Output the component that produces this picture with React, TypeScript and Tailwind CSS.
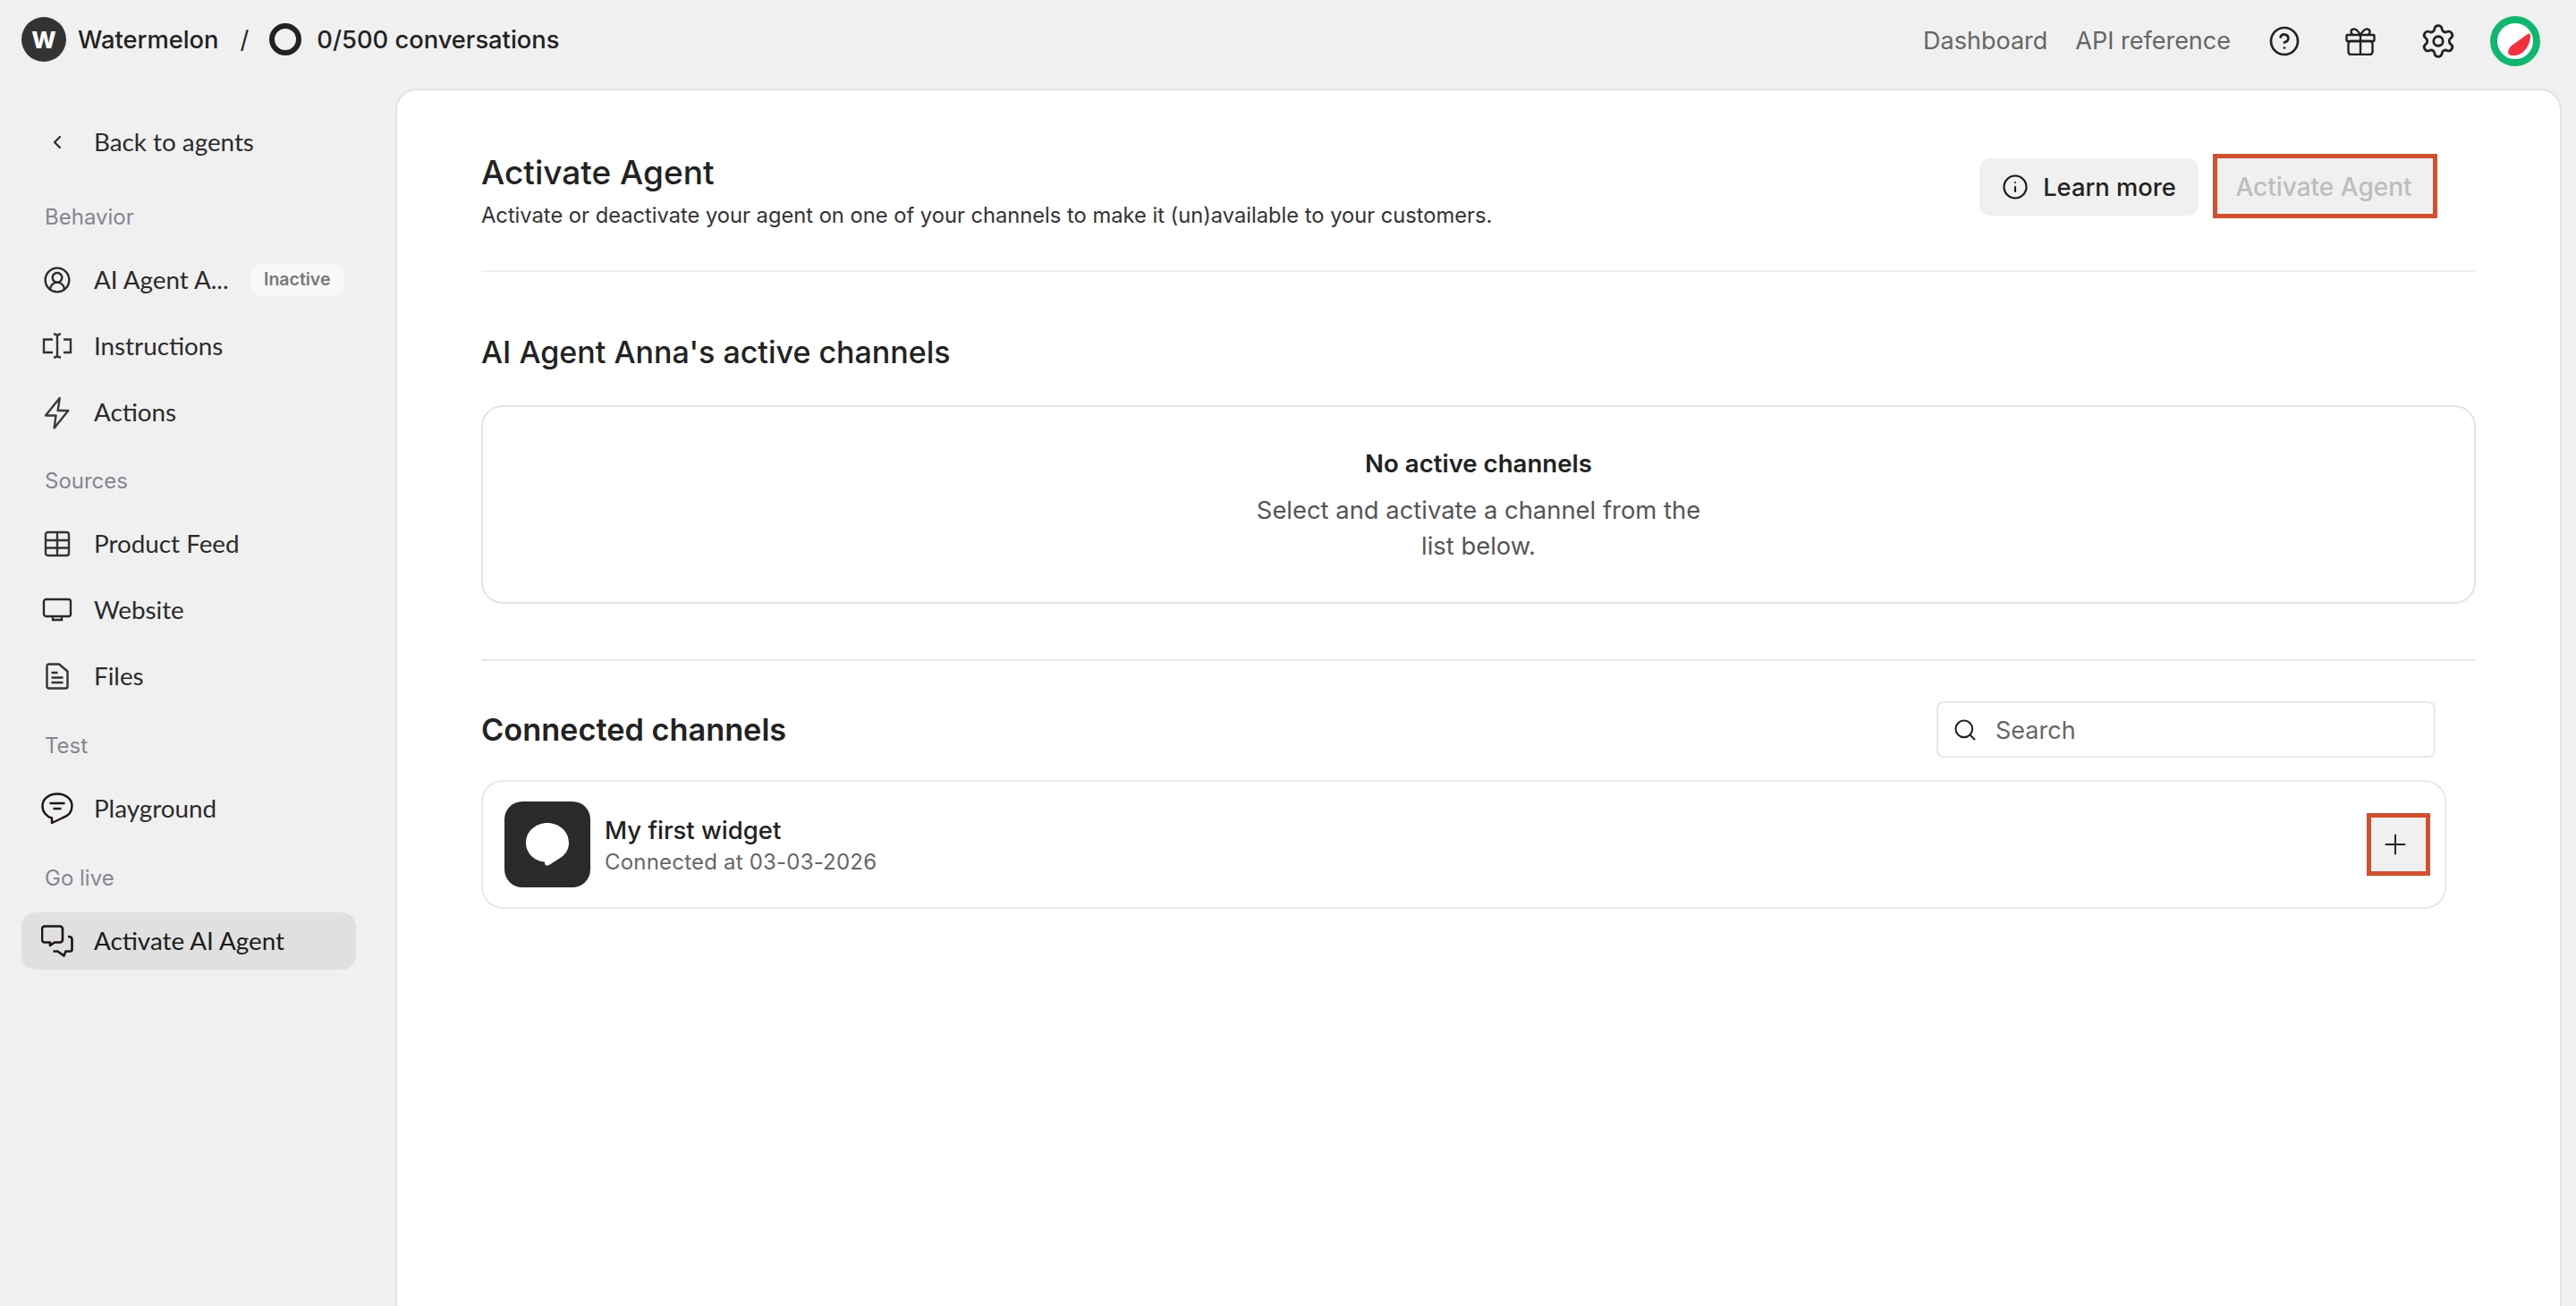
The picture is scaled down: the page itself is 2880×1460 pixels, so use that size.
import { ChevronLeft, CircleHelp, CircleUserRound, Info, Plus, Search, Settings } from "lucide-react";
import type { ReactNode } from "react";

const inter = "font-['Inter',sans-serif]";

function InstructionsIcon() {
  return (
    <svg width="34" height="30" viewBox="0 0 34 30" fill="none" stroke="#333" strokeWidth="2.4">
      <path d="M12 7.5H2V22h10" />
      <path d="M24 7.5h8V22h-8" />
      <path d="M13 1.5c2 0 4 .8 4 2.5v21c0 1.7-2 2.5-4 2.5M21 1.5c-2 0-4 .8-4 2.5v21c0 1.7 2 2.5 4 2.5" />
    </svg>
  );
}

function BoltIcon() {
  return (
    <svg width="29" height="37" viewBox="0 0 29 37" fill="none" stroke="#3a3a3a" strokeWidth="2.4" strokeLinejoin="round">
      <path d="M17.7 2 2 21.5h11.5L11.7 35.5 27.3 16H15.7Z" />
    </svg>
  );
}

function GridIcon() {
  return (
    <svg width="30" height="30" viewBox="0 0 30 30" fill="none" stroke="#333" strokeWidth="2.4">
      <rect x="2" y="2" width="26" height="26" rx="2.5" />
      <path d="M2 11h26M2 19.5h26M15 2v26" />
    </svg>
  );
}

function MonitorIcon() {
  return (
    <svg width="34" height="28" viewBox="0 0 34 28" fill="none" stroke="#2a2a2a" strokeWidth="2.4">
      <rect x="2" y="2" width="30" height="19" rx="2.5" />
      <path d="M12 21v4h10v-4" />
    </svg>
  );
}

function FileIcon() {
  return (
    <svg width="26" height="30" viewBox="0 0 26 30" fill="none" stroke="#333" strokeWidth="2.4">
      <path d="M3.5 1.5H15l9.5 8v17a2 2 0 0 1-2 2h-19a2 2 0 0 1-2-2v-23a2 2 0 0 1 2-2z" strokeLinejoin="round" />
      <path d="M6.5 11h7M6.5 16.5h13M6.5 22h13" />
    </svg>
  );
}

function PlaygroundIcon() {
  return (
    <svg width="36" height="36" viewBox="0 0 36 36" fill="none" stroke="#1c1414" strokeWidth="2.4">
      <path d="M18 1.5c9 0 16.5 5.5 16.5 13.5 0 7-5 11.5-11 13.5L12 34v-5.5C6 27 1.5 22 1.5 15 1.5 7 9 1.5 18 1.5z" strokeLinejoin="round" />
      <path d="M9.5 12h17M13.5 18h9" />
    </svg>
  );
}

function ChatsIcon() {
  return (
    <svg width="36" height="36" viewBox="0 0 36 36" fill="none" stroke="#1c1414" strokeWidth="2.6">
      <path d="M4 1.5h17a3 3 0 0 1 3 3v12a3 3 0 0 1-3 3h-6l-5 3.5v-3.5H4a3 3 0 0 1-3-3v-12a3 3 0 0 1 3-3z" strokeLinejoin="round" />
      <path d="M30 13c2.5 0 4.500 1 4.500 3v11.500a2 2 0 0 1-2 2h-5l-2 5-7-5h-5" strokeLinejoin="round" />
    </svg>
  );
}

function GiftIcon() {
  return (
    <svg width="34" height="31" viewBox="0 0 34 31" fill="none" stroke="#222" strokeWidth="2.4" className="ml-[50px]">
      <rect x="1.5" y="8" width="31" height="7" rx="1" />
      <rect x="3.5" y="15" width="27" height="15" rx="3" />
      <path d="M17 8v22M17 8C14 3 11 1 9 1.5 6 2 5.5 7 9 8M17 8C20 3 23 1 25 1.5 28 2 28.5 7 25 8" />
    </svg>
  );
}

function NavItem({ icon, label, active, children }: { icon: ReactNode; label: string; active?: boolean; children?: ReactNode }) {
  return (
    <div className={`flex h-[64px] items-center rounded-[16px] ${active ? "bg-[#e0e0e0] text-[#1c1c1c]" : "text-[#2b2b2b]"}`}>
      <div className="mr-[2px] flex w-[79px] shrink-0 justify-center">{icon}</div>
      {children ?? <span>{label}</span>}
    </div>
  );
}

function NavLabel({ children }: { children: ReactNode }) {
  return <div className={`${inter} mt-[30px] mb-[23px] h-[30px] pl-[26px] text-[24px] leading-[30px] text-[#85868f]`}>{children}</div>;
}

function Sidebar() {
  return (
    <aside className="w-[442px] shrink-0 pl-[24px] pr-[44px] pt-[28px] font-['Lato',sans-serif] text-[27.8px]">
      <NavItem icon={<ChevronLeft size={24} strokeWidth={2.2} color="#2a2a2a" />} label="Back to agents" />
      <div className="h-[7px]" />
      <NavLabel>Behavior</NavLabel>
      <div className="flex flex-col gap-[10px]">
        <NavItem icon={<CircleUserRound size={32} strokeWidth={1.8} color="#2a2a2a" />} label="AI Agent A...">
          <span className="w-[153px] whitespace-nowrap">AI Agent A...</span>
          <span className={`${inter} ml-[22px] flex h-[36px] items-center rounded-[12px] bg-[#f8f8f8] px-[15px] text-[19.5px] font-semibold text-[#777]`}>Inactive</span>
        </NavItem>
        <NavItem icon={<InstructionsIcon />} label="Instructions" />
        <NavItem icon={<BoltIcon />} label="Actions" />
      </div>
      <NavLabel>Sources</NavLabel>
      <div className="flex flex-col gap-[10px]">
        <NavItem icon={<GridIcon />} label="Product Feed" />
        <NavItem icon={<MonitorIcon />} label="Website" />
        <NavItem icon={<FileIcon />} label="Files" />
      </div>
      <div className="h-[1px]" />
      <NavLabel>Test</NavLabel>
      <NavItem icon={<PlaygroundIcon />} label="Playground" />
      <div className="h-[1px]" />
      <NavLabel>Go live</NavLabel>
      <NavItem icon={<ChatsIcon />} label="Activate AI Agent" active />
    </aside>
  );
}

function TopBar() {
  return (
    <header className={`${inter} flex h-[99px] items-start pl-[24px] pr-[40px] pt-[19px] text-[27.3px] text-[#222]`}>
      <div className="flex h-[50px] w-[50px] items-center justify-center rounded-full bg-[#333] text-[26px] font-extrabold text-white">W</div>
      <span className="ml-[13px] font-medium leading-[51px]">Watermelon</span>
      <span className="ml-[24px] leading-[51px]">/</span>
      <div className="ml-[23px] mt-[7px] h-[36px] w-[36px] rounded-full border-[6px] border-[#222]" />
      <span className="ml-[17px] font-medium leading-[51px]">0/500 conversations</span>
      <div className="ml-auto -mt-[1px] flex items-center text-[27px]">
        <span className="leading-[50px] text-[#666]">Dashboard</span>
        <span className="ml-[31px] leading-[50px] text-[#666]">API reference</span>
        <CircleHelp size={36} strokeWidth={1.8} color="#222" className="ml-[42px]" />
        <GiftIcon />
        <Settings size={42} strokeWidth={1.6} color="#222" className="ml-[49px]" />
        <svg width="56" height="56" viewBox="0 0 56 56" className="ml-[37px]">
          <circle cx="28" cy="28" r="24" fill="#fff" stroke="#10b76e" strokeWidth="8" />
          <path d="M21 43C19 39 21 36 24 33L42 20C44 19 45 20 45 22C45 32 38 43 28 44C25 44 22 44 21 43Z" fill="#f4303f" />
        </svg>
      </div>
    </header>
  );
}

function Main() {
  return (
    <main className={`${inter} min-h-0 flex-1 rounded-t-[24px] border-2 border-b-0 border-[#e4e4e4] bg-white px-[94px] text-[#222]`}>
      <div className="flex items-start justify-between border-b-2 border-[#efefef] pb-[45px] pr-[43px] pt-[68px]">
        <div>
          <h1 className="text-[37px] font-medium leading-[48px]">Activate Agent</h1>
          <p className="mt-[8px] text-[23.7px] leading-[32px] text-[#333]">Activate or deactivate your agent on one of your channels to make it (un)available to your customers.</p>
        </div>
        <div className="mt-[3px] flex items-center gap-[16px] text-[27.3px] font-medium">
          <button className="mt-[2px] flex h-[64px] w-[245px] items-center justify-center gap-[16px] rounded-[12px] bg-[#f0f0f0] leading-[34px]">
            <Info size={30} strokeWidth={1.7} color="#1c1414" />
            <span className="mt-[2px]">Learn more</span>
          </button>
          <button className="flex h-[72px] w-[251px] items-center justify-center border-[5px] border-[#d0502f] bg-[#f0f0f0] pr-[3px] pt-[2px] text-[28px] text-[#bdbdbd]">Activate Agent</button>
        </div>
      </div>

      <h2 className="mt-[66px] text-[34px] font-medium leading-[48px]">AI Agent Anna's active channels</h2>
      <div className="mt-[35px] flex h-[222px] flex-col items-center justify-center rounded-[24px] border-2 border-[#e4e4e4]">
        <div className="text-[27.6px] font-semibold leading-[40px]">No active channels</div>
        <p className="mt-[12px] w-[510px] text-center text-[27.4px] leading-[40px] text-[#555]">Select and activate a channel from the list below.</p>
      </div>

      <div className="mt-[62px] h-[2px] bg-[#e8e8e8]" />

      <div className="mt-[45px] flex items-center justify-between pr-[45px]">
        <h2 className="text-[34.3px] font-semibold leading-[48px]">Connected channels</h2>
        <div className="flex h-[63px] w-[558px] items-center rounded-[8px] border-2 border-[#e8e8e8] pl-[16px] text-[27px] text-[#666]">
          <Search size={28} strokeWidth={1.8} color="#222" />
          <span className="ml-[20px] mt-[3px]">Search</span>
        </div>
      </div>

      <div className="mr-[33px] mt-[25px] flex h-[144px] items-center justify-between rounded-[24px] border-2 border-[#e8e8e8] pl-[24px] pr-[16px]">
        <div className="flex items-center gap-[16px]">
          <div className="flex h-[96px] w-[96px] items-center justify-center rounded-[20px] bg-[#2a2a2a]">
            <svg width="96" height="96" viewBox="0 0 96 96" fill="#fff">
              <path d="M48 24C61 24 72 33.500 72 46C72 53 69 58 64 62L50 71C47 72.5 45 71 45 69V67.5C33 66.5 24 57.5 24 46C24 33.500 35 24 48 24Z" />
            </svg>
          </div>
          <div className="mt-[3px]">
            <div className="text-[27.5px] font-medium leading-[36px]">My first widget</div>
            <div className="text-[24px] leading-[36px] tracking-[0.2px] text-[#666]">Connected at 03-03-2026</div>
          </div>
        </div>
        <button className="flex h-[70px] w-[71px] items-center justify-center border-[5px] border-[#d0502f] bg-[#f0f0f0] pr-[8px]">
          <Plus size={36} strokeWidth={1.3} color="#222" />
        </button>
      </div>
    </main>
  );
}

export default function App() {
  return (
    <div className="flex h-[1460px] w-[2880px] flex-col overflow-hidden bg-[#f0f0f0]">
      <TopBar />
      <div className="flex min-h-0 flex-1 pr-[16px]">
        <Sidebar />
        <Main />
      </div>
    </div>
  );
}
